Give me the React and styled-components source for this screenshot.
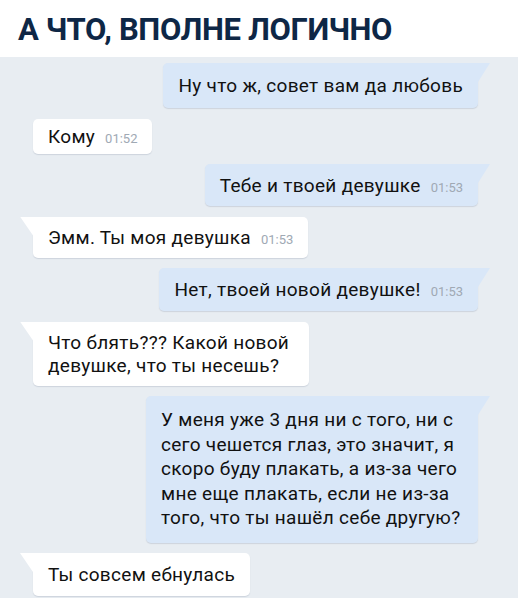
import React from "react";
import styled, { createGlobalStyle, css } from "styled-components";

const Global = createGlobalStyle`
  html, body { margin: 0; padding: 0; background: #ffffff; }
  body { font-family: Roboto, "Noto Sans", Arial, sans-serif; }
`;

const Page = styled.div`
  width: 518px;
  height: 604px;
  background: #ffffff;
  display: flex;
  flex-direction: column;
  overflow: hidden;
`;

const Header = styled.header`
  height: 57px;
  flex: none;
  display: flex;
  align-items: center;
  padding: 0 0 0 18px;
  box-sizing: border-box;
`;

const Title = styled.h1`
  margin: 0;
  font-family: "Liberation Sans Narrow", "Roboto", sans-serif;
  font-weight: 700;
  font-size: 31px;
  letter-spacing: -0.35px;
  color: #0e2746;
  line-height: 1;
  padding-top: 1px;
`;

const Chat = styled.main`
  background: #e8edf2;
  display: flex;
  flex-direction: column;
  gap: 10.5px;
  padding: 6px 40px 2px 33px;
  height: 541px;
  flex: none;
  box-sizing: border-box;
`;

const Row = styled.div`
  display: flex;
  justify-content: ${(p) => (p.$out ? "flex-end" : "flex-start")};
`;

const Bubble = styled.div`
  position: relative;
  box-sizing: border-box;
  ${(p) => (p.$width ? css`width: ${p.$width}px;` : "")}
  padding: ${(p) => p.$pad}px 15px ${(p) => p.$pad}px 15px;
  background: ${(p) => (p.$out ? "#d9e7f8" : "#ffffff")};
  color: #111111;
  font-size: 19px;
  letter-spacing: 0.3px;
  line-height: ${(p) => p.$lh}px;
  border-radius: 5px;
  box-shadow: 0 1px 1px rgba(60, 80, 110, 0.16);
  ${(p) =>
    p.$tail &&
    (p.$out
      ? css`
          border-top-right-radius: 0;
          &::after {
            content: "";
            position: absolute;
            top: 0;
            right: -12px;
            width: 12px;
            height: 19px;
            background: #d9e7f8;
            clip-path: polygon(0 0, 100% 0, 0 100%);
          }
        `
      : css`
          border-top-left-radius: 0;
          &::after {
            content: "";
            position: absolute;
            top: 0;
            left: -13px;
            width: 13px;
            height: 19px;
            background: #ffffff;
            clip-path: polygon(0 0, 100% 0, 100% 100%);
          }
        `)}
`;

const Time = styled.span`
  font-size: 13px;
  line-height: 1;
  letter-spacing: 0;
  color: #a0a9b4;
  margin-left: 10px;
`;

const Bottom = styled.div`
  flex: 1;
  background: #ffffff;
`;

const messages = [
  { out: true, text: "Ну что ж, совет вам да любовь", pad: 11 },
  { out: false, text: "Кому", time: "01:52", pad: 6, noTail: true },
  { out: true, text: "Тебе и твоей девушке", time: "01:53", pad: 9.5 },
  { out: false, text: "Эмм. Ты моя девушка", time: "01:53", pad: 9 },
  { out: true, text: "Нет, твоей новой девушке!", time: "01:53", pad: 10 },
  { out: false, text: "Что блять??? Какой новой девушке, что ты несешь?", width: 276, pad: 9, lh: 23 },
  {
    out: true,
    text: "У меня уже 3 дня ни с того, ни с сего чешется глаз, это значит, я скоро буду плакать, а из-за чего мне еще плакать, если не из-за того, что ты нашёл себе другую?",
    width: 332,
    pad: 12,
    lh: 24.5,
  },
  { out: false, text: "Ты совсем ебнулась", pad: 10 },
];

export default function App() {
  return (
    <>
      <Global />
      <Page>
        <Header>
          <Title>А ЧТО, ВПОЛНЕ ЛОГИЧНО</Title>
        </Header>
        <Chat>
          {messages.map((m, i) => (
            <Row key={i} $out={m.out}>
              <Bubble
                $out={m.out}
                $tail={!m.noTail}
                $width={m.width}
                $pad={m.pad}
                $lh={m.lh || 23}
              >
                {m.text}
                {m.time && <Time>{m.time}</Time>}
              </Bubble>
            </Row>
          ))}
        </Chat>
        <Bottom />
      </Page>
    </>
  );
}
